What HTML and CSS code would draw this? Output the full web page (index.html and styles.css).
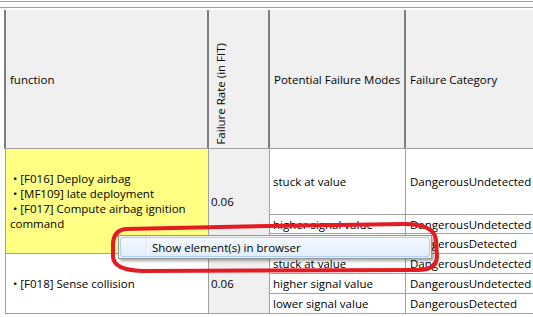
FILE: index.html
```html
<!DOCTYPE html>
<html>
<head>
<meta charset="utf-8">
<link rel="stylesheet" href="styles.css">
</head>
<body>
<div class="topbar"></div>
<div class="table">
  <div class="thead">
    <div class="th">function</div>
    <div class="th th-vert"><span class="vert">Failure Rate (in FIT)</span></div>
    <div class="th">Potential Failure Modes</div>
    <div class="th">Failure Category</div>
  </div>
  <div class="group g1">
    <div class="td func yellow">
      <div class="lines">
        <div>&nbsp;• [F016] Deploy airbag</div>
        <div>&nbsp;• [MF109] late deployment</div>
        <div>&nbsp;• [F017] Compute airbag ignition<br>command</div>
      </div>
    </div>
    <div class="td rate">0.06</div>
    <div class="td mode">stuck at value</div>
    <div class="td cat">DangerousUndetected</div>
    <div class="td mode">higher signal value</div>
    <div class="td cat">DangerousUndetected</div>
    <div class="td mode">lower signal value</div>
    <div class="td cat">DangerousDetected</div>
  </div>
  <div class="group g2">
    <div class="td func">
      <div class="lines">
        <div>&nbsp;• [F018] Sense collision</div>
      </div>
    </div>
    <div class="td rate">0.06</div>
    <div class="td mode">stuck at value</div>
    <div class="td cat">DangerousUndetected</div>
    <div class="td mode">higher signal value</div>
    <div class="td cat">DangerousUndetected</div>
    <div class="td mode">lower signal value</div>
    <div class="td cat">DangerousDetected</div>
  </div>
</div>
<div class="menu">
  <div class="menu-item">Show element(s) in browser</div>
</div>
<svg class="annot" width="533" height="317" viewBox="0 0 533 317">
  <path d="M126 229 L270 226 L404 224 Q434 224 436 240 L437 257 Q436 270 418 270 L142 271 Q114 270 113 257 L113 243 Q114 230 126 229 Z" fill="none" stroke="#e41b23" stroke-width="4" stroke-linejoin="round"/>
</svg>
</body>
</html>
```
FILE: styles.css
```css
html, body {
  margin: 0;
  padding: 0;
}
body {
  background: #ffffff;
  font-family: "Open Sans", "DejaVu Sans", sans-serif;
  font-size: 11.5px;
  color: #000;
  width: 533px;
  height: 317px;
  overflow: hidden;
  position: relative;
}
.topbar {
  margin-top: 1px;
  height: 5px;
  border-top: 1px solid #a0a0a0;
  border-bottom: 1px solid #a0a0a0;
  margin-bottom: 2px;
}
.table {
  margin-left: 4px;
  width: 529px;
  overflow: hidden;
}
.thead {
  display: grid;
  grid-template-columns: 203px 61px 136px 1fr;
  height: 139px;
  box-sizing: border-box;
  border-bottom: 1px solid #a0a0a0;
  background: #f0f0f0;
}
.th {
  border-left: 2px solid #7d7d7d;
  display: flex;
  align-items: center;
  padding-left: 4px;
  white-space: nowrap;
  overflow: hidden;
}
.th-vert {
  align-items: flex-end;
  padding-left: 5px;
  padding-bottom: 3px;
}
.vert {
  writing-mode: vertical-rl;
  transform: rotate(180deg);
  line-height: 13px;
}
.group {
  display: grid;
  grid-template-columns: 203px 61px 136px 1fr;
  margin-left: 1px;
}
.g1 {
  grid-template-rows: 66px 19px 20px;
}
.g2 {
  grid-template-rows: 20px 20px 20px;
}
.td {
  border-left: 1px solid #a0a0a0;
  border-bottom: 1px solid #a0a0a0;
  display: flex;
  align-items: center;
  padding-left: 4px;
  white-space: nowrap;
  overflow: hidden;
  box-sizing: border-box;
}
.func {
  grid-column: 1;
  grid-row: span 3;
  line-height: 15px;
}
.rate {
  grid-column: 2;
  grid-row: span 3;
  background: #f0f0f0;
  padding-left: 2px;
}
.mode {
  padding-left: 3px;
}
.yellow {
  background: #ffff84;
}
.menu {
  position: absolute;
  left: 118px;
  top: 235px;
  width: 314px;
  height: 24px;
  box-sizing: border-box;
  border: 1px solid #979797;
  background: #f0f0f0;
  box-shadow: 2px 2px 3px rgba(0, 0, 0, 0.35);
  padding: 1px;
}
.menu-item {
  position: relative;
  height: 100%;
  box-sizing: border-box;
  border: 1px solid #aecff7;
  border-radius: 3px;
  background: linear-gradient(#f3f8fd, #e2edfb);
  display: flex;
  align-items: center;
  padding-left: 31px;
  white-space: nowrap;
}
.menu-item::before {
  content: "";
  position: absolute;
  left: 25px;
  top: 0;
  bottom: 0;
  width: 1px;
  background: #dfe6ee;
  border-right: 1px solid #ffffff;
}
.annot {
  position: absolute;
  left: 0;
  top: 0;
  pointer-events: none;
}
```
